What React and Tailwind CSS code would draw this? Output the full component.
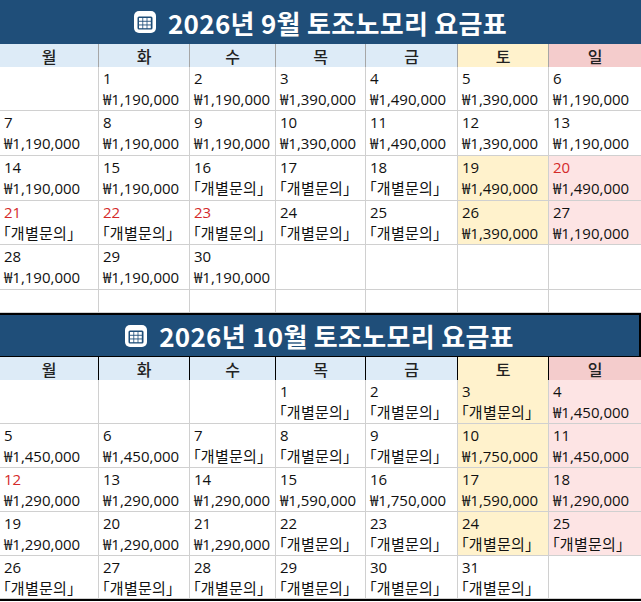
import React from 'react';

const COLS = 'grid grid-cols-[99px_91px_86px_90px_92px_91px_92px]';
const DAYS = ['월', '화', '수', '목', '금', '토', '일'];
const ASK = '「개별문의」';

// [day, price, bg, red]
const september = [
  [[null], [1, '₩1,190,000'], [2, '₩1,190,000'], [3, '₩1,390,000'], [4, '₩1,490,000'], [5, '₩1,390,000'], [6, '₩1,190,000']],
  [[7, '₩1,190,000'], [8, '₩1,190,000'], [9, '₩1,190,000'], [10, '₩1,390,000'], [11, '₩1,490,000'], [12, '₩1,390,000'], [13, '₩1,190,000']],
  [[14, '₩1,190,000'], [15, '₩1,190,000'], [16, ASK], [17, ASK], [18, ASK], [19, '₩1,490,000', 'sat'], [20, '₩1,490,000', 'sun', true]],
  [[21, ASK, null, true], [22, ASK, null, true], [23, ASK, null, true], [24, ASK], [25, ASK], [26, '₩1,390,000', 'sat'], [27, '₩1,190,000', 'sun']],
  [[28, '₩1,190,000'], [29, '₩1,190,000'], [30, '₩1,190,000'], [null], [null], [null], [null]],
];

const october = [
  [[null], [null], [null], [1, ASK], [2, ASK], [3, ASK, 'sat'], [4, '₩1,450,000', 'sun']],
  [[5, '₩1,450,000'], [6, '₩1,450,000'], [7, ASK], [8, ASK], [9, ASK], [10, '₩1,750,000', 'sat'], [11, '₩1,450,000', 'sun']],
  [[12, '₩1,290,000', null, true], [13, '₩1,290,000'], [14, '₩1,290,000'], [15, '₩1,590,000'], [16, '₩1,750,000'], [17, '₩1,590,000', 'sat'], [18, '₩1,290,000', 'sun']],
  [[19, '₩1,290,000'], [20, '₩1,290,000'], [21, '₩1,290,000'], [22, ASK], [23, ASK], [24, ASK, 'sat'], [25, ASK, 'sun']],
  [[26, ASK], [27, ASK], [28, ASK], [29, ASK], [30, ASK], [31, ASK], [null]],
];

function CalendarIcon() {
  return (
    <svg width="22" height="22" viewBox="0 0 22 22" className="shrink-0">
      <rect x="0" y="0" width="22" height="22" rx="5" fill="#ffffff" />
      <rect x="3.5" y="5.5" width="15" height="13" rx="1.5" fill="#1f4e79" />
      {[0, 1, 2].map((r) =>
        [0, 1, 2].map((c) => (
          <rect key={`${r}-${c}`} x={5 + c * 4.2} y={7 + r * 3.7} width="3.4" height="2.8" fill="#ffffff" />
        ))
      )}
    </svg>
  );
}

function Title({ text, className = '' }) {
  return (
    <div className={`bg-[#1f4e79] flex items-center justify-center gap-[12px] text-white ${className}`}>
      <CalendarIcon />
      <span className="text-[26px] font-bold tracking-[0.3px]">{text}</span>
    </div>
  );
}

function DayHeader({ dark }) {
  const line = dark ? 'border-black' : 'border-[#a6a6a6]';
  return (
    <div className={`${COLS} h-[23px] border-b ${line}`}>
      {DAYS.map((d, i) => (
        <div
          key={d}
          className={`flex items-center justify-center text-[16px] font-medium text-[#222] ${i < 6 ? `border-r ${line}` : ''} ${
            i === 5 ? 'bg-[#fff2cc]' : i === 6 ? 'bg-[#f4cccc]' : 'bg-[#ddebf7]'
          }`}
        >
          {d}
        </div>
      ))}
    </div>
  );
}

function Week({ days, height }) {
  return (
    <div className={`${COLS} ${height}`}>
      {days.map(([day, price, bg, red], i) => (
        <div
          key={i}
          className={`border-b border-[#d0d0d0] ${i < 6 ? 'border-r' : ''} pl-[4px] pt-[1px] text-[15px] leading-[21px] text-[#111] whitespace-nowrap overflow-hidden font-['Open_Sans','Noto_Sans_CJK_KR',sans-serif] ${
            bg === 'sat' ? 'bg-[#fff2cc]' : bg === 'sun' ? 'bg-[#fde4e4]' : 'bg-white'
          }`}
        >
          {day && <div className={red ? 'text-[#d42a2a]' : ''}>{day}</div>}
          {price &&
            (price === ASK ? (
              <div className="tracking-[0.3px] -ml-[1px] [font-feature-settings:'palt']">{price}</div>
            ) : (
              <div>{price}</div>
            ))}
        </div>
      ))}
    </div>
  );
}

export default function App() {
  return (
    <div className="w-[641px] h-[602px] bg-white overflow-hidden font-['Noto_Sans_CJK_KR',sans-serif]">
      <section>
        <Title text="2026년 9월 토조노모리 요금표" className="h-[44px]" />
        <DayHeader />
        <Week days={september[0]} height="h-[44px]" />
        <Week days={september[1]} height="h-[45px]" />
        <Week days={september[2]} height="h-[45px]" />
        <Week days={september[3]} height="h-[44px]" />
        <Week days={september[4]} height="h-[45px]" />
        <Week days={[[null], [null], [null], [null], [null], [null], [null]]} height="h-[23px]" />
      </section>
      <section className="border-t-2 border-r-2 border-b-2 border-black">
        <Title text="2026년 10월 토조노모리 요금표" className="h-[42px] border-b border-black" />
        <DayHeader dark />
        <Week days={october[0]} height="h-[44px]" />
        <Week days={october[1]} height="h-[44px]" />
        <Week days={october[2]} height="h-[44px]" />
        <Week days={october[3]} height="h-[44px]" />
        <Week days={october[4]} height="h-[43px]" />
      </section>
    </div>
  );
}
